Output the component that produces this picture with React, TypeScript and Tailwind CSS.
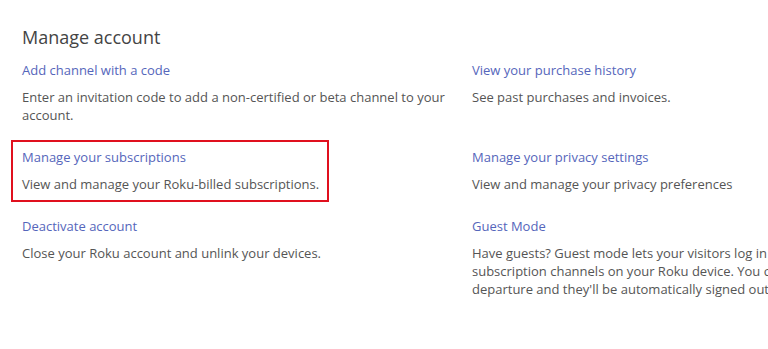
import React from 'react';

type Item = { title: string; desc: React.ReactNode; boxed?: boolean; nowrap?: boolean };

const ROWS: [Item, Item][] = [
  [
    { title: 'Add channel with a code', desc: 'Enter an invitation code to add a non-certified or beta channel to your account.' },
    { title: 'View your purchase history', desc: 'See past purchases and invoices.' },
  ],
  [
    { title: 'Manage your subscriptions', desc: 'View and manage your Roku-billed subscriptions.', boxed: true },
    { title: 'Manage your privacy settings', desc: 'View and manage your privacy preferences' },
  ],
  [
    { title: 'Deactivate account', desc: 'Close your Roku account and unlink your devices.' },
    {
      title: 'Guest Mode',
      nowrap: true,
      desc: (
        <>
          Have guests? Guest mode lets your visitors log in and stream
          <br />
          subscription channels on your Roku device. You can set their
          <br />
          departure and they'll be automatically signed out.
        </>
      ),
    },
  ],
];

const Entry = ({ item }: { item: Item }) => (
  <div className="relative">
    {item.boxed && (
      <div className="absolute -left-[11px] -top-[8px] w-[318px] h-[62px] border-2 border-[#e0101e] pointer-events-none" />
    )}
    <a href="#" className="block text-[13px] leading-[18px] text-[#5566bb]">
      {item.title}
    </a>
    <p className={`mt-[9px] text-[13px] leading-[18px] text-[#555555] ${item.nowrap ? 'whitespace-nowrap' : ''}`}>
      {item.desc}
    </p>
  </div>
);

export default function App() {
  return (
    <div
      className="w-[768px] h-[349px] overflow-hidden bg-white"
      style={{ fontFamily: '"Open Sans", "Liberation Sans", sans-serif' }}
    >
      <div className="pl-[22px] pt-[26px] w-[900px]">
        <h1 className="text-[18px] leading-[22px] text-[#444444]">Manage account</h1>
        <div className="mt-[13px] grid grid-cols-[428px_428px] gap-x-[22px] gap-y-[24px]">
          {ROWS.map(([left, right]) => (
            <React.Fragment key={left.title}>
              <Entry item={left} />
              <Entry item={right} />
            </React.Fragment>
          ))}
        </div>
      </div>
    </div>
  );
}
